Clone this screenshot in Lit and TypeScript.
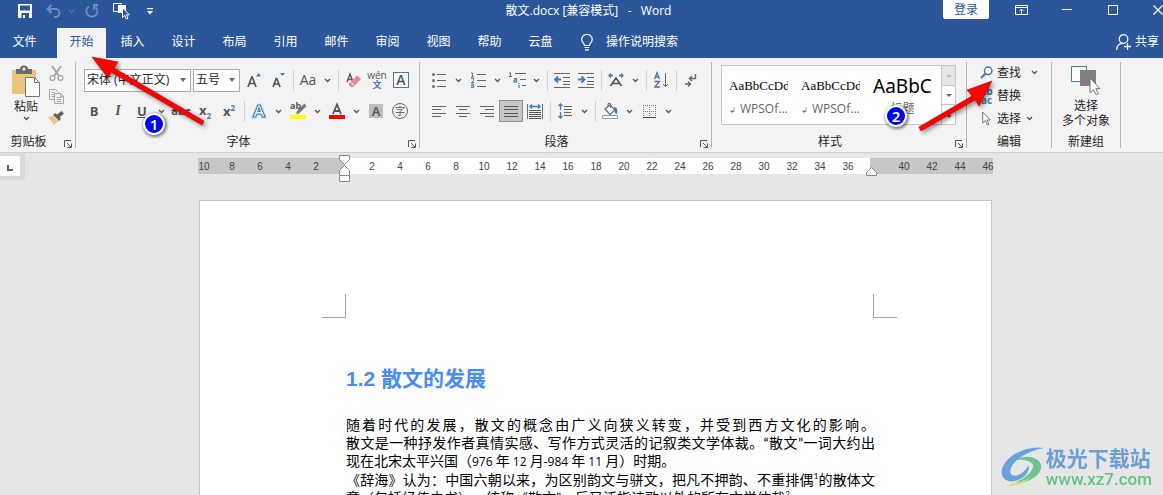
import { LitElement, html, svg, css, TemplateResult } from "lit";
import { customElement } from "lit/decorators.js";

type Art = ReturnType<typeof svg>;

const draw = (w: number, h: number, art: Art): TemplateResult =>
  html`<svg width=${w} height=${h} viewBox="0 0 ${w} ${h}" aria-hidden="true">${art}</svg>`;

const chevron = draw(7, 5, svg`<path d="M1 1l2.5 2.5L6 1" fill="none" stroke="#555" stroke-width="1.3"/>`);
const lines = (rows: number[][], color = "#666") =>
  rows.map(([x, y, w]) => svg`<rect x=${x} y=${y} width=${w} height="1" fill=${color}/>`);

const save = draw(14, 14, svg`<path d="M0 0h14v14H0zM2 1.5v5h10v-5zM3.500 9v5h1.500v-3h2v3h4V9z" fill="#fff" fill-rule="evenodd"/>`);
const undo = draw(15, 14, svg`<path d="M5.500 1L1.500 5l4 4M2 5h7.500a4 4 0 0 1 0 8H8" fill="none" stroke="#6f8fc4" stroke-width="2"/>`);
const undoMore = draw(7, 5, svg`<path d="M1 1l2.500 2.500L6 1" fill="none" stroke="#6f8fc4"/>`);
const redo = draw(14, 14, svg`<path d="M4 2.500A5.500 5.500 0 1 0 10.500 3M8 1h5M9 1v5" fill="none" stroke="#6f8fc4" stroke-width="1.800"/>`);
const touch = draw(17, 17, svg`<path d="M5 8.500H.5v-8h8v1" fill="none" stroke="#fff"/><path d="M5 2h8v6h-2L9 5v5H5z" fill="#fff"/><path d="M9.500 4.500v10l2.200-2 1.600 3.500 1.700-.8-1.600-3.400h2.800z" fill="#2b579a" stroke="#fff"/>`);
const qatMore = draw(6, 7, svg`<path d="M0 0h6v1.200H0zM0 3h6L3 6.500z" fill="#fff"/>`);
const ribbonOpt = draw(13, 10, svg`<path d="M.5.5h12v9H.5zM.5 2.500h12M6.500 9V4M4.500 6l2-2 2 2" fill="none" stroke="#fff"/>`);
const minimize = draw(10, 10, svg`<path d="M0 4.500h10" stroke="#fff"/>`);
const maximize = draw(10, 10, svg`<path d="M.5.5h9v9h-9z" fill="none" stroke="#fff"/>`);
const close = draw(10, 10, svg`<path d="M.5.5l9 9M9.500.5l-9 9" stroke="#fff" stroke-width="1.200"/>`);
const bulb = draw(12, 17, svg`<path d="M3.500 11.500C3.500 9.500.7 8.600.7 5.500a5.200 5 0 0 1 10.500 0c0 3.100-2.800 4-2.800 6zM3.500 13.500h5M4 15.800h4" fill="none" stroke="#fff" stroke-width="1.200"/>`);
const person = draw(16, 17, svg`<circle cx="7.500" cy="5" r="4.300" fill="none" stroke="#fff" stroke-width="1.200"/><path d="M.6 16c0-4 2.500-6.700 6-6.700M8 12.500h7M11.500 9v7" fill="none" stroke="#fff" stroke-width="1.300"/>`);

const paste = draw(30, 32, svg`<path d="M1 4h24v24H1z" fill="#ebc57c"/><path d="M5 3h4a4 3.500 0 0 1 8 0h4v5H5z" fill="#6d6d6d"/><circle cx="13" cy="3" r="1.500" fill="#f3f3f3"/><path d="M14.500 11.500h9l5 5v14h-14z" fill="#fff" stroke="#777"/><path d="M23.500 11.500v5h5" fill="none" stroke="#777"/>`);
const cut = draw(15, 15, svg`<path d="M3 0l7 10M12 0L5 10" stroke="#a8a8a8" stroke-width="2"/><circle cx="3.500" cy="12" r="2.400" fill="none" stroke="#a8a8a8" stroke-width="1.300"/><circle cx="11.500" cy="12" r="2.400" fill="none" stroke="#a8a8a8" stroke-width="1.300"/>`);
const copy = draw(15, 15, svg`<path d="M.5.5h6l3 3v7h-9zM2.500 3.500h3M2.500 5.500h3M2.500 7.500h3" fill="#f3f3f3" stroke="#aaa6a9"/><path d="M5.500 4.500h6l3 3v7h-9zM11.500 4.500v3h3M7.500 8.500h5M7.500 10.500h5M7.500 12.500h5" fill="#f3f3f3" stroke="#aaa6a9"/>`);
const brush = draw(16, 14, svg`<path d="M0 6l5-1 5 5-4 4z" fill="#ebc57c"/><path d="M5 4l2-2 2 1.500L13.500 0 16 2.500 12 6l1 2-2 2z" fill="#666"/>`);

const growA = draw(14, 15, svg`<path d="M1 14L4.700 4h.600L9 14M2.500 10.500h5" fill="none" stroke="#555" stroke-width="1.700"/><path d="M9 3.500L11.500 0 14 3.500z" fill="#3f7bb5"/>`);
const shrinkA = draw(14, 15, svg`<path d="M2 14L5.200 5.500h.600L9 14M3.500 11h4" fill="none" stroke="#555" stroke-width="1.700"/><path d="M9 0h5l-2.500 3z" fill="#3f7bb5"/>`);
const eraser = draw(15, 15, svg`<path d="M1 9L4 1l3 8M2 6.500h4" fill="none" stroke="#555" stroke-width="1.400"/><path d="M11 2.500L15 6l-7.500 8h-3L2.500 11z" fill="#e8899a"/><path d="M4.500 9l4 3.500" stroke="#f3f3f3"/>`);
const outlineA = draw(16, 16, svg`<path d="M2 14L7 2h2l5 12h-2.500L10.500 11h-5l-1 3zM6.500 8.500h3L8 4.500z" fill="#fff" stroke="#9cc3e6" stroke-width="2.600"/><path d="M2 14L7 2h2l5 12h-2.500L10.500 11h-5l-1 3zM6.500 8.500h3L8 4.500z" fill="#fff" stroke="#3f7bb5"/>`);
const highlight = draw(17, 16, svg`<path d="M14.500.5L7 8l-1 3 3-.5L16.500 3z" fill="#777"/><path d="M0 12h16v4H0z" fill="#ff0"/>`);
const colorA = draw(16, 16, svg`<path d="M4 11L8 1.500 12 11M5.500 8h5" fill="none" stroke="#555" stroke-width="1.800"/><path d="M0 12h16v4H0z" fill="#f00"/>`);

const dots = [1, 7, 13];
const bullets = draw(14, 15, svg`${dots.map((y) => svg`<circle cx="1.500" cy=${y + 0.5} r="1.500" fill="#3f7bb5"/>`)}${lines([[5, 1, 9], [5, 7, 9], [5, 13, 9]])}`);
const numbering = draw(15, 16, svg`<path d="M0 1h1.500v4M0 5h3M0 6.500h2.500v2L.5 10.500H3M0 12h2.500v3.500H0M0 13.700h2.500" fill="none" stroke="#3f7bb5"/>${lines([[6, 2, 9], [6, 8, 9], [6, 14, 9]])}`);
const multilevel = draw(17, 16, svg`<path d="M0 1h1.500v3.500M0 4.500h3M5 6.500h2.500v3.500H5V8h2M10 13v3M10 11v1" fill="none" stroke="#3f7bb5" stroke-width="1.200"/>${lines([[6, 1, 11], [11, 7, 6], [13, 13, 4]])}`);
const outdent = draw(16, 15, svg`${lines([[0, 0, 16], [9, 4, 7], [9, 8, 7], [9, 11, 7], [0, 14, 16]])}<path d="M7 6.500H1.500M4 3.500L1 6.500l3 3" fill="none" stroke="#3f7bb5" stroke-width="1.800"/>`);
const indent = draw(16, 15, svg`${lines([[0, 0, 16], [9, 4, 7], [9, 8, 7], [9, 11, 7], [0, 14, 16]])}<path d="M0 6.500h5.500M3.500 3.500l3 3-3 3" fill="none" stroke="#3f7bb5" stroke-width="1.800"/>`);
const asian = draw(16, 14, svg`<path d="M2.500 13L8 5l5.500 8M5 10.500h6" fill="none" stroke="#555" stroke-width="1.700"/><path d="M5 2.500H1M3 .5l-2 2 2 2M11 2.500h4M13 .5l2 2-2 2" fill="none" stroke="#3f7bb5" stroke-width="1.300"/>`);
const sortAz = draw(14, 16, svg`<path d="M.5 7L3 .8 5.500 7M1.500 5h3" fill="none" stroke="#3f7bb5" stroke-width="1.400"/><path d="M.5 9.500h4.800L1 15h5" fill="none" stroke="#8a52b5" stroke-width="1.400"/><path d="M11.500 1v14M9 12l2.500 2.500L14 12" fill="none" stroke="#666"/>`);
const marks = draw(12, 13, svg`<path d="M10.500 0v4.500H5M7 2L4.500 4.500 7 7M0 10h5M3 7.500L5.500 10 3 12.500" fill="none" stroke="#666" stroke-width="1.400"/>`);
const alignL = draw(14, 11, svg`${lines([[0, 0, 14], [0, 3, 9], [0, 7, 14], [0, 10, 9]])}`);
const alignC = draw(14, 11, svg`${lines([[0, 0, 14], [3, 3, 8], [0, 7, 14], [3, 10, 8]])}`);
const alignR = draw(14, 11, svg`${lines([[0, 0, 14], [5, 3, 9], [0, 7, 14], [5, 10, 9]])}`);
const alignJ = draw(14, 11, svg`${lines([[0, 0, 14], [0, 3, 14], [0, 7, 14], [0, 10, 14]], "#555")}`);
const distribute = draw(16, 16, svg`<path d="M.5 1v15M15.500 1v15" stroke="#3f7bb5"/><path d="M3 3.500h10M5 1.500l-2 2 2 2M11 1.500l2 2-2 2" fill="none" stroke="#3f7bb5" stroke-width="1.300"/>${lines([[2, 7, 12], [2, 9, 12], [2, 11, 12], [2, 13, 12], [2, 15, 12]], "#555")}`);
const spacing = draw(14, 16, svg`<path d="M2.500 1v6M.5 3l2-2 2 2M2.500 9v6M.5 13l2 2 2-2" fill="none" stroke="#3f7bb5" stroke-width="1.300"/>${lines([[6, 3, 8], [6, 6, 8], [6, 9, 7], [6, 12, 8]])}`);
const bucket = draw(17, 16, svg`<path d="M3 6l5-4 5 5-5 4.500z" fill="#fff" stroke="#666" stroke-width="1.200"/><path d="M6 4V.6h2.500V5" fill="none" stroke="#666"/><path d="M12 4c3 0 4 3 3 7l-2-1z" fill="#3f7bb5"/><path d="M.5 12.500h15v3H.5z" fill="#fff" stroke="#999"/>`);
const borders = draw(13, 13, svg`<path d="M0 .5h13M0 6.500h13M.5 0v12M6.500 0v12M12.500 0v12" fill="none" stroke="#777" stroke-dasharray="1 1"/><path d="M0 12.500h13" stroke="#444"/>`);

const find = draw(13, 13, svg`<circle cx="8.200" cy="4.800" r="3.700" fill="#fff" stroke="#3f7bb5" stroke-width="1.500"/><path d="M5.500 7.500L1 12" stroke="#3f7bb5" stroke-width="2"/>`);
const arrowCursor = draw(9, 15, svg`<path d="M.7 1v11l2.600-2.500 2 4.500 1.700-.8L5 9h3.200z" fill="#fff" stroke="#777"/>`);
const selectObjects = draw(30, 30, svg`<path d="M.5.5h15v15H.5z" fill="#fff" stroke="#3f7bb5"/><path d="M9 4h16v16H9z" fill="#808080"/><path d="M19 12v15l3.500-3.200 2.500 5 2.300-1.100-2.400-5H29z" fill="#fff" stroke="#777"/>`);
const launcherArt = draw(8, 8, svg`<path d="M.5 7V.5H7M3 3l4 4M7.500 3.500v4h-4" fill="none" stroke="#555"/>`);

@customElement("app-root")
export class AppRoot extends LitElement {
  static styles = css`
    :host {
      display: flex;
      flex-direction: column;
      position: relative;
      height: 100vh;
      overflow: hidden;
      background: #e6e6e6;
      color: #262626;
      font: 12px/16px "Open Sans", "Noto Sans CJK SC", sans-serif;
    }
    * { box-sizing: border-box; }
    svg { display: block; flex: none; overflow: visible; }
    button, select {
      font: inherit;
      color: inherit;
      margin: 0;
      padding: 0;
      border: 0;
      background: none;
    }
    button { display: flex; align-items: center; justify-content: center; white-space: nowrap; }

    .titlebar {
      display: grid;
      grid-template-columns: 1fr auto 1fr;
      height: 28px;
      background: #2b579a;
      color: #fff;
    }
    .quick { display: flex; align-items: center; height: 22px; padding-left: 18px; }
    .quick .gap { margin-left: 14px; }
    .quick .wide { margin-left: 17px; }
    .quick .near { margin-left: 7px; }
    .quick .mid { margin-left: 10px; }
    .title { padding: 3px 0 0 14px; white-space: pre; }
    .window { display: flex; justify-content: flex-end; height: 19px; }
    .login {
      width: 46px;
      margin-right: 9px;
      border-radius: 0 0 2px 2px;
      background: #fff;
      color: #2b579a;
    }
    .winbtn { width: 46px; }
    .winbtn.last { width: 27px; justify-content: flex-start; padding-left: 17px; }

    .tabs { display: flex; align-items: stretch; height: 30px; background: #2b579a; color: #fff; }
    .tab { width: 49px; margin-right: 2px; color: #fff; text-decoration: none; text-align: center; line-height: 28px; }
    .tab.file { margin-right: 8px; }
    .tab.active { background: #f3f3f3; color: #2b579a; }
    .tell { margin-left: 14px; gap: 13px; height: 28px; }
    .share { margin-left: auto; padding-right: 4px; gap: 3px; height: 28px; }

    .ribbon { display: flex; height: 95px; background: #f3f3f3; border-bottom: 1px solid #d0d0d0; }
    .group { display: flex; flex-direction: column; padding: 10px 6px 0; border: 0; position: relative; }
    .group.para { padding: 10px 8px 0 7px; }
    .group.styles { padding: 7px 10px 0 9px; }
    .group.clip { width: 75px; padding: 8px 6px 0 8px; }
    .group.edit { width: 84px; padding: 3px 0 0 11px; }
    .group.fresh { width: 68px; padding: 8px 0 0; align-items: center; }
    .divider { width: 1px; margin: 4px 0; background: #b5b5b5; }
    .foot { position: absolute; left: 0; right: 0; bottom: 2px; text-align: center; }
    .foot.inset { padding-right: 18px; }
    .launcher { position: absolute; right: 3px; bottom: 4px; }
    .row { display: flex; align-items: center; height: 24px; margin-bottom: 7px; }
    .row.combos { padding-left: 2px; gap: 0; }
    .tool { width: 24px; height: 22px; flex: none; color: #555; }
    .tool.on { background: #c6c6c6; outline: 1px solid #8f8f8f; outline-offset: -1px; }
    .split { display: flex; flex: none; }
    .more { width: 15px; height: 22px; }
    .sep { width: 6px; height: 21px; flex: none; background: linear-gradient(#d0d0d0, #d0d0d0) center / 1px 100% no-repeat; }
    .combo {
      appearance: none;
      height: 23px;
      padding: 0 16px 0 2px;
      border: 1px solid #ababab;
      border-radius: 0;
      background: #fff url("data:image/svg+xml,%3Csvg xmlns='http://www.w3.org/2000/svg' width='6' height='4'%3E%3Cpath d='M0 0h6L3 4z' fill='%23666'/%3E%3C/svg%3E") right 4px center no-repeat;
    }
    .combo.face { width: 107px; margin-right: 2px; }
    .combo.size { width: 47px; margin-right: 2px; }
    .bold { font-weight: 700; font-size: 13px; }
    .italic { font: italic 700 14px "Liberation Serif", serif; }
    .under { text-decoration: underline; }
    .strike { text-decoration: line-through; font-size: 11px; font-weight: 700; }
    .script { font-size: 13px; font-weight: 700; }
    .script sub, .script sup { font-size: 8px; line-height: 8px; color: #3f7bb5; }
    .case { font-size: 14px; }
    .phonetic { flex-direction: column; font-size: 10px; line-height: 9px; }
    .phonetic b { color: #3f7bb5; font-size: 9px; line-height: 10px; }
    .boxed { width: 16px; border: 1px solid #3f7bb5; font-size: 14px; line-height: 14px; font-weight: 600; background: #fff; }
    .shaded { width: 14px; background: #bdbdbd; font-size: 13px; line-height: 14px; font-weight: 600; }
    .ring { width: 16px; height: 16px; border: 1px solid #666; border-radius: 50%; font-size: 10px; line-height: 14px; }
    .pen { position: relative; }
    .pen span { position: absolute; left: 4px; top: 1px; font-size: 9px; line-height: 10px; font-weight: 700; }

    .clipgrid { display: flex; gap: 4px; }
    .big { flex-direction: column; gap: 1px; }
    .clip .big { width: 36px; justify-content: flex-start; }
    .stack { display: flex; flex-direction: column; justify-content: space-between; height: 59px; }

    .gallery { display: flex; height: 60px; border: 1px solid #c6c6c6; background: #fff; }
    .style { flex-direction: column; justify-content: flex-start; width: 72px; padding: 8px 6px 0 7px; color: #666; }
    .sample { width: 59px; height: 24px; overflow: hidden; color: #000; font: 13px/24px "Liberation Serif", serif; text-align: left; }
    .sample.large { font: 19px/24px "Noto Sans", "Open Sans", sans-serif; }
    .name { height: 22px; line-height: 22px; }
    .name i { font: 8px/8px "DejaVu Sans", sans-serif; margin-right: 4px; }
    .scroller { display: flex; flex-direction: column; width: 15px; margin: -1px -1px -1px 3px; }
    .scroller button { flex: 1; border: 1px solid #c6c6c6; margin-bottom: -1px; }
    .scroller button:last-child { margin-bottom: 0; }
    .scroller button[disabled] { background: #e6e6e6; }

    .command { justify-content: flex-start; height: 23px; }
    .glyph { width: 17px; margin-right: 2px; display: flex; justify-content: center; }
    .command > svg { margin-left: 10px; }
    .command.near > svg { margin-left: 5px; }
    .replace { font-size: 10px; line-height: 9px; font-weight: 700; color: #3f7bb5; }
    .fresh .big { gap: 0; line-height: 15px; }
    .fresh svg { margin-bottom: 2px; }

    .workspace { flex: 1; min-height: 0; padding: 5px 0 0 28px; position: relative; overflow: hidden; }
    .corner { position: absolute; left: 0; top: -1px; width: 25px; height: 28px; border: solid #dadada; border-width: 4px 5px 4px 0; background: #fff; padding: 9px 0 0 7px; }
    .ruler { position: relative; width: 795px; height: 16px; margin: 0 auto; background: linear-gradient(#fff, #fff) 146px 0 / 526px 100% no-repeat #c6c6c6; }
    .ticks { display: flex; margin: 0 0 0 -8px; padding: 0; list-style: none; font: 10px/17px "Liberation Sans", sans-serif; color: #444; }
    .ticks li { width: 28px; flex: none; text-align: center; }
    .stop { position: absolute; }
    .stop.left { left: 141px; top: -3px; }
    .stop.right { left: 668px; top: 9px; }

    .page {
      width: 793px;
      margin: 26px auto 0;
      padding: 93px 116px 40px 146px;
      border: 1px solid #c6c6c6;
      background: #fff;
      color: #000;
    }
    .crops { display: flex; justify-content: space-between; height: 24px; margin: 0 -22px 0 -24px; }
    .crops span { width: 24px; border: solid #a6a6a6; border-width: 0 1px 1px 0; }
    .crops span:last-child { border-width: 0 0 1px 1px; }
    h1 { margin: 46px 0 22px; font: 700 21px/30px "Liberation Sans", "Noto Sans CJK SC", sans-serif; color: #4a8cf5; }
    p { margin: 0; font: 14px/18px "Lato", "Noto Sans CJK SC", sans-serif; white-space: nowrap; text-spacing-trim: space-all; }
    p.full { text-align: justify; text-align-last: justify; white-space: normal; }
    p sup { font-size: 8px; line-height: 8px; }
    .latin { font-family: "Open Sans", sans-serif; font-size: 12px; }

    .note { position: absolute; pointer-events: none; filter: drop-shadow(2px 2px 2px rgba(0, 0, 0, .45)); }
    .note.a1 { left: 88px; top: 52px; }
    .note.a2 { left: 914px; top: 76px; }
    .badge {
      position: absolute;
      width: 22px;
      height: 22px;
      border: 2px solid #fff;
      border-radius: 50%;
      background: #00f;
      color: #fff;
      font: 600 15px/18px "Noto Sans", sans-serif;
      text-align: center;
      box-shadow: 1px 1px 3px 1px rgba(0, 0, 0, .5);
    }
    .badge.b1 { left: 143px; top: 113px; }
    .badge.b2 { left: 885px; top: 105px; }
    .brand { position: absolute; right: 11px; bottom: 6px; display: flex; gap: 1px; align-items: center; opacity: .9; }
    .brand div { font: 700 21px/24px "Noto Sans CJK SC", sans-serif; color: #5f97d4; }
    .brand span { display: block; font: 500 17px/20px "Roboto", "Liberation Sans", sans-serif; color: #55bd80; }
  `;

  private tool(label: string, art: unknown, cls = "") {
    return html`<button class="tool ${cls}" aria-label=${label}>${art}</button>`;
  }

  private split(label: string, art: unknown, cls = "") {
    return html`<span class="split">${this.tool(label, art, cls)}<button class="more" aria-label="${label}选项">${chevron}</button></span>`;
  }

  private foot(name: string, launcher = true) {
    return html`<div class="foot ${launcher ? "inset" : ""}">${name}</div>
      ${launcher ? html`<button class="launcher" aria-label="${name}设置">${launcherArt}</button>` : ""}`;
  }

  private title() {
    return html`<header class="titlebar">
      <div class="quick">
        <button aria-label="保存">${save}</button>
        <button class="gap" aria-label="撤消">${undo}</button>
        <button class="near" aria-label="撤消列表">${undoMore}</button>
        <button class="mid" aria-label="重复">${redo}</button>
        <button class="gap" aria-label="触摸/鼠标模式">${touch}</button>
        <button class="wide" aria-label="自定义快速访问工具栏">${qatMore}</button>
      </div>
      <div class="title">散文.docx [兼容模式]   -   Word</div>
      <div class="window">
        <button class="login">登录</button>
        <button class="winbtn" aria-label="功能区显示选项">${ribbonOpt}</button>
        <button class="winbtn" aria-label="最小化">${minimize}</button>
        <button class="winbtn" aria-label="最大化">${maximize}</button>
        <button class="winbtn last" aria-label="关闭">${close}</button>
      </div>
    </header>`;
  }

  private tabs() {
    const names = ["文件", "开始", "插入", "设计", "布局", "引用", "邮件", "审阅", "视图", "帮助", "云盘"];
    return html`<nav class="tabs">
      ${names.map((n, i) => html`<a href="#" class="tab ${i === 0 ? "file" : i === 1 ? "active" : ""}">${n}</a>`)}
      <button class="tell">${bulb}操作说明搜索</button>
      <button class="share">${person}共享</button>
    </nav>`;
  }

  private ribbon() {
    const sep = html`<span class="sep"></span>`;
    const divider = html`<div class="divider"></div>`;
    return html`<div class="ribbon">
      <section class="group clip">
        <div class="clipgrid">
          <button class="big">${paste}<span>粘贴</span>${chevron}</button>
          <div class="stack">
            <button aria-label="剪切">${cut}</button>
            <button aria-label="复制">${copy}</button>
            <button aria-label="格式刷">${brush}</button>
          </div>
        </div>
        ${this.foot("剪贴板")}
      </section>${divider}
      <section class="group">
        <div class="row combos">
          <select class="combo face" aria-label="字体"><option>宋体 (中文正文)</option></select>
          <select class="combo size" aria-label="字号"><option>五号</option></select>
          ${this.tool("增大字号", growA)}${this.tool("减小字号", shrinkA)}${sep}
          ${this.split("更改大小写", "Aa", "case")}${sep}
          ${this.tool("清除所有格式", eraser)}
          ${this.tool("拼音指南", html`wén<b>文</b>`, "phonetic")}
          ${this.tool("字符边框", html`<span class="boxed">A</span>`)}
        </div>
        <div class="row">
          ${this.tool("加粗", "B", "bold")}${this.tool("倾斜", "I", "italic")}
          ${this.split("下划线", "U", "bold under")}${this.tool("删除线", "abc", "strike")}
          ${this.tool("下标", html`<span>x<sub>2</sub></span>`, "script")}
          ${this.tool("上标", html`<span>x<sup>2</sup></span>`, "script")}${sep}
          ${this.split("文本效果", outlineA)}
          ${this.split("突出显示", html`<span>ab</span>${highlight}`, "pen")}
          ${this.split("字体颜色", colorA)}
          ${this.tool("字符底纹", html`<span class="shaded">A</span>`)}
          ${this.tool("带圈字符", html`<span class="ring">字</span>`)}
        </div>
        ${this.foot("字体")}
      </section>${divider}
      <section class="group para">
        <div class="row">
          ${this.split("项目符号", bullets)}${this.split("编号", numbering)}${this.split("多级列表", multilevel)}${sep}
          ${this.tool("减少缩进量", outdent)}${this.tool("增加缩进量", indent)}${sep}
          ${this.split("中文版式", asian)}${sep}${this.tool("排序", sortAz)}${sep}${this.tool("显示编辑标记", marks)}
        </div>
        <div class="row">
          ${this.tool("左对齐", alignL)}${this.tool("居中", alignC)}${this.tool("右对齐", alignR)}
          ${this.tool("两端对齐", alignJ, "on")}${this.tool("分散对齐", distribute)}${sep}
          ${this.split("行和段落间距", spacing)}${sep}${this.split("底纹", bucket)}${this.split("边框", borders)}
        </div>
        ${this.foot("段落")}
      </section>${divider}
      <section class="group styles">
        <div class="gallery">
          <button class="style"><span class="sample">AaBbCcDd</span><span class="name"><i>↲</i>WPSOf...</span></button>
          <button class="style"><span class="sample">AaBbCcDd</span><span class="name"><i>↲</i>WPSOf...</span></button>
          <button class="style"><span class="sample large">AaBbC</span><span class="name">标题</span></button>
          <div class="scroller">
            <button disabled aria-label="上一行">${draw(6, 3, svg`<path d="M0 3h6L3 0z" fill="#bbb"/>`)}</button>
            <button aria-label="下一行">${draw(6, 3, svg`<path d="M0 0h6L3 3z" fill="#666"/>`)}</button>
            <button aria-label="其他样式">${draw(6, 6, svg`<path d="M0 0h6v1H0zM0 3h6L3 6z" fill="#666"/>`)}</button>
          </div>
        </div>
        ${this.foot("样式")}
      </section>${divider}
      <section class="group edit">
        <button class="command"><span class="glyph">${find}</span>查找${chevron}</button>
        <button class="command"><span class="glyph replace">ab<br>ac</span>替换</button>
        <button class="command near"><span class="glyph">${arrowCursor}</span>选择${chevron}</button>
        ${this.foot("编辑", false)}
      </section>${divider}
      <section class="group fresh">
        <button class="big">${selectObjects}<span>选择</span><span>多个对象</span></button>
        ${this.foot("新建组", false)}
      </section>${divider}
    </div>`;
  }

  private documentArea() {
    const ticks = Array.from({ length: 29 }, (_, i) => i * 2 - 10);
    return html`<main class="workspace">
      <div class="corner">${draw(6, 6, svg`<path d="M1 0v5h5" fill="none" stroke="#666" stroke-width="2"/>`)}</div>
      <div class="ruler">
        <ul class="ticks">${ticks.map((n) => html`<li>${n === 0 || n === 38 ? "" : Math.abs(n)}</li>`)}</ul>
        <span class="stop left">${draw(11, 28, svg`<path d="M.5.500h10v4l-5 5-5-5zM.5 20.500v-5l5-5 5 5v5zM.5 20.500h10v6H.5z" fill="#fff" stroke="#8a8a8a"/>`)}</span>
        <span class="stop right">${draw(11, 9, svg`<path d="M.5 8.500v-3l5-5 5 5v3z" fill="#fff" stroke="#8a8a8a"/>`)}</span>
      </div>
      <article class="page">
        <div class="crops"><span></span><span></span></div>
        <h1>1.2 散文的发展</h1>
        <p class="full">随着时代的发展，散文的概念由广义向狭义转变，并受到西方文化的影响。</p>
        <p class="full">散文是一种抒发作者真情实感、写作方式灵活的记叙类文学体裁。“散文”一词大约出</p>
        <p>现在北宋太平兴国（<span class="latin">976 </span>年<span class="latin"> 12 </span>月<span class="latin">-984 </span>年<span class="latin"> 11 </span>月）时期。</p>
        <p class="full">《辞海》认为：中国六朝以来，为区别韵文与骈文，把凡不押韵、不重排偶<sup>1</sup>的散体文</p>
        <p>章（包括经传史书），统称《散文”，后又泛指诗歌以外的所有文学体裁<sup>2</sup>。</p>
      </article>
      <div class="brand">
        ${draw(44, 42, svg`<path d="M43 2C27-1 5 9 1 23c-2 9 5 14 13 12 9-2 15-9 14-16-6 10-15 13-18 9C6 21 20 6 43 2z" fill="#5b9bdc"/><path d="M14 14c10-6 24-3 26 5 2 10-13 19-34 21 12-4 24-11 26-19 1-5-7-8-18-7z" fill="#63c08a"/><path d="M12 37c7 0 13-3 17-6-3 5-12 9-23 9z" fill="#d8e36a"/>`)}
        <div>极光下载站<span>www.xz7.com</span></div>
      </div>
    </main>`;
  }

  private notes() {
    return html`
      <div class="note a1">${draw(118, 76, svg`<path d="M4 5l26 5-4 6 90 53-2 4-91-53-3 6z" fill="#f00" stroke="#a01010" stroke-width=".6"/>`)}</div>
      <div class="note a2">${draw(84, 58, svg`<path d="M78 5L53 14l5 6L5 51l2 4L61 24l4 6z" fill="#f00" stroke="#a01010" stroke-width=".6"/>`)}</div>
      <div class="badge b1">1</div>
      <div class="badge b2">2</div>`;
  }

  render() {
    return html`${this.title()}${this.tabs()}${this.ribbon()}${this.documentArea()}${this.notes()}`;
  }
}
